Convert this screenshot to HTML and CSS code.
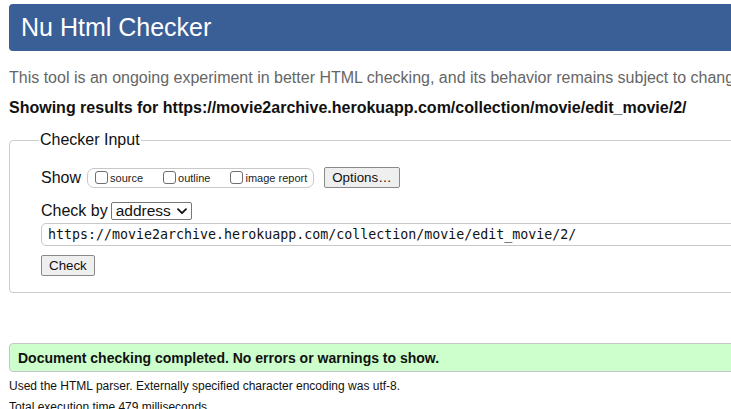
FILE: index.html
```html
<!DOCTYPE html>
<html lang="en">
<head>
<meta charset="utf-8">
<title>Nu Html Checker</title>
<link rel="stylesheet" href="styles.css">
</head>
<body>
<div class="page">
  <h1 class="header">Nu Html Checker</h1>
  <p class="intro">This tool is an ongoing experiment in better HTML checking, and its behavior remains subject to change</p>
  <p class="showing">Showing results for https://movie2archive.herokuapp.com/collection/movie/edit_movie/2/</p>
  <fieldset class="checker">
    <legend class="legend">Checker Input</legend>
    <div class="row show-row">
      <span class="label">Show</span>
      <span class="options-box">
        <label class="opt"><input type="checkbox" class="cb"><span>source</span></label>
        <label class="opt"><input type="checkbox" class="cb"><span>outline</span></label>
        <label class="opt"><input type="checkbox" class="cb"><span>image report</span></label>
      </span>
      <button class="btn">Options…</button>
    </div>
    <div class="row by-row">
      <span class="label">Check by</span>
      <span class="select-wrap">
        <select class="select"><option>address</option></select>
        <svg class="chev" width="10" height="7" viewBox="0 0 10 7"><path d="M1 1.2 L5 5.2 L9 1.2" fill="none" stroke="#111" stroke-width="1.8" stroke-linecap="round" stroke-linejoin="round"/></svg>
      </span>
    </div>
    <div class="url" role="textbox">https://movie2archive.herokuapp.com/collection/movie/edit_movie/2/</div>
    <div class="row check-row">
      <button class="btn">Check</button>
    </div>
  </fieldset>
  <p class="success">Document checking completed. No errors or warnings to show.</p>
  <p class="note">Used the HTML parser. Externally specified character encoding was utf-8.</p>
  <p class="note note2">Total execution time 479 milliseconds.</p>
</div>
</body>
</html>
```
FILE: styles.css
```css
html, body {
  margin: 0;
  padding: 0;
  overflow: hidden;
  background: #fff;
}
body {
  font-family: "Liberation Sans", Arial, sans-serif;
  color: #111;
}
.page {
  width: 1000px;
  padding: 4px 9px 0;
  display: flex;
  flex-direction: column;
}
.header {
  margin: 0;
  height: 47px;
  box-sizing: border-box;
  background: #3a5e96;
  border-radius: 4px;
  color: #fff;
  font-size: 25px;
  font-weight: normal;
  display: flex;
  align-items: center;
  padding: 0 0 1px 12px;
}
.intro {
  margin: 17px 0 0;
  font-size: 16px;
  line-height: 20px;
  color: #666;
  white-space: nowrap;
}
.showing {
  margin: 10px 0 0;
  font-size: 16px;
  line-height: 20px;
  font-weight: bold;
  color: #111;
  white-space: nowrap;
}
.checker {
  margin: 12px 0 0;
  border: 1px solid #ccc;
  border-radius: 4px;
  padding: 17px 0 16px 31px;
  display: flex;
  flex-direction: column;
  align-items: flex-start;
}
.legend {
  font-size: 16px;
  line-height: 20px;
  padding: 0 1px;
  margin-left: -2px;
  color: #111;
}
.row {
  display: flex;
  align-items: center;
}
.label {
  font-size: 16px;
  line-height: 20px;
}
.show-row {
  height: 21px;
}
.options-box {
  margin-left: 6px;
  height: 20px;
  box-sizing: border-box;
  border: 1px solid #c8c8c8;
  border-radius: 7px;
  display: flex;
  align-items: center;
  padding: 0 6px 0 7px;
  gap: 20px;
}
.opt {
  display: flex;
  align-items: center;
  font-size: 11px;
  color: #222;
}
.cb {
  appearance: none;
  -webkit-appearance: none;
  margin: 0 2px 0 0;
  width: 13px;
  height: 13px;
  border: 1px solid #6f6f6f;
  border-radius: 3px;
  background: #fff;
}
.btn {
  font-family: "Liberation Sans", Arial, sans-serif;
  font-size: 13.33px;
  height: 21px;
  padding: 0 7px;
  margin: 0 0 0 10px;
  background: #efefef;
  border: 1px solid #8a8a8a;
  border-radius: 2px;
  color: #111;
  line-height: 19px;
}
.check-row .btn {
  margin-left: 0;
}
.by-row {
  margin-top: 14px;
  height: 18px;
}
.select-wrap {
  position: relative;
  margin-left: 3px;
  display: flex;
}
.select {
  appearance: none;
  -webkit-appearance: none;
  width: 81px;
  height: 18px;
  box-sizing: border-box;
  border: 1px solid #767676;
  border-radius: 2px;
  background: #fff;
  font-family: "Liberation Sans", Arial, sans-serif;
  font-size: 15.5px;
  line-height: 16px;
  padding: 0 0 0 4px;
  color: #111;
}
.chev {
  position: absolute;
  right: 5px;
  top: 6px;
}
.url {
  margin-top: 3px;
  width: 940px;
  height: 23px;
  box-sizing: border-box;
  border: 1px solid #c8c8c8;
  border-radius: 5px;
  padding: 0 6px;
  font-family: "DejaVu Sans Mono", Menlo, monospace;
  font-size: 13.3px;
  line-height: 21px;
  color: #111;
  background: #fff;
  white-space: nowrap;
}
.check-row {
  margin-top: 9px;
}
.success {
  margin: 50px 0 0;
  height: 29px;
  box-sizing: border-box;
  background: #ccffcc;
  border: 1px solid #c6c6c6;
  border-radius: 4px;
  padding: 0 8px;
  display: flex;
  align-items: center;
  font-size: 14px;
  font-weight: bold;
  color: #111;
}
.note {
  margin: 6px 0 0;
  font-size: 12px;
  line-height: 16px;
  color: #111;
}
.note2 {
  margin-top: 5px;
}
```
